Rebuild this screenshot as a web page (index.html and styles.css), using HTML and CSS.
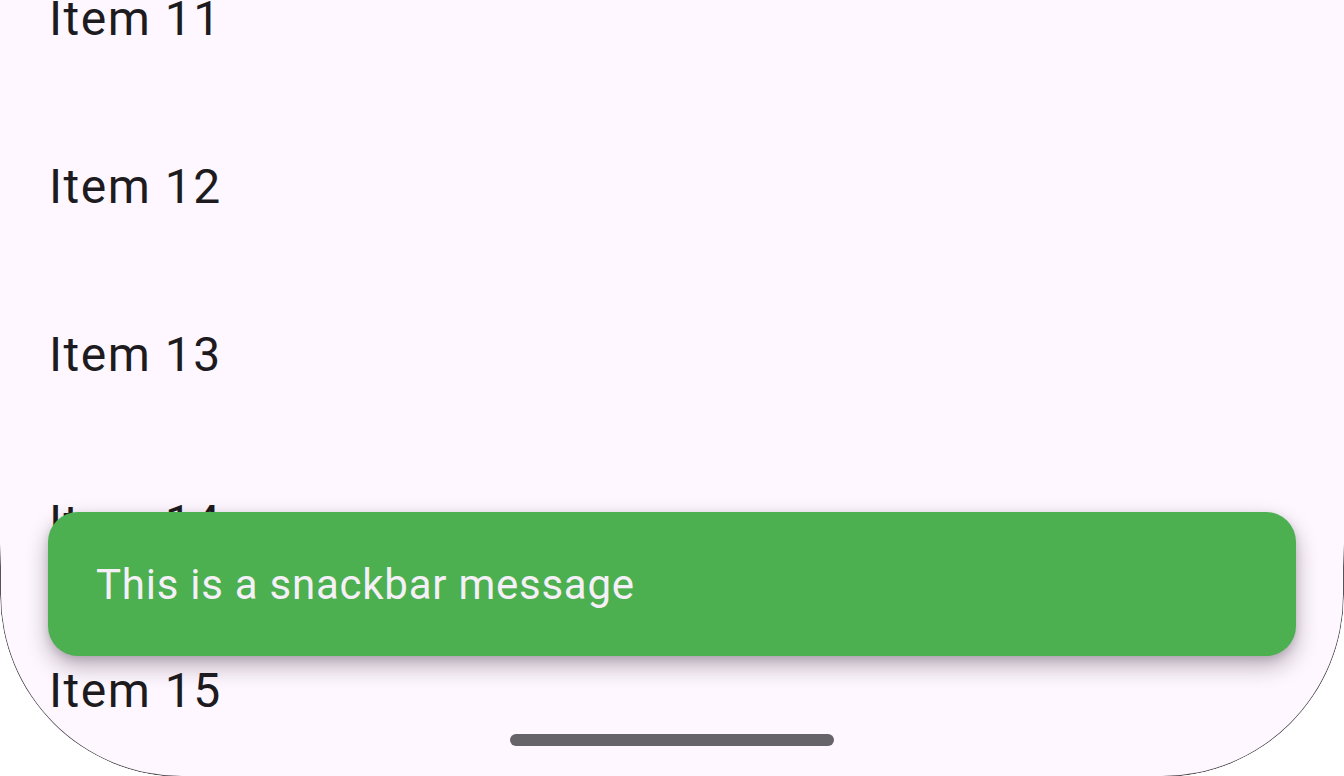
FILE: index.html
```html
<!DOCTYPE html>
<html lang="en">
<head>
<meta charset="utf-8">
<title>Snackbar</title>
<link rel="stylesheet" href="styles.css">
</head>
<body>
<div class="screen">
  <ul class="list">
    <li class="row">Item 11</li>
    <li class="row">Item 12</li>
    <li class="row">Item 13</li>
    <li class="row">Item 14</li>
    <li class="row">Item 15</li>
  </ul>
  <div class="snackbar"><span class="snack-text">This is a snackbar message</span></div>
  <div class="home-indicator"></div>
  <div class="frame-edge"></div>
</div>
</body>
</html>
```
FILE: styles.css
```css
html, body {
  margin: 0;
  padding: 0;
  background: #ffffff;
  overflow: hidden;
}
body {
  width: 1344px;
  height: 776px;
}
.screen {
  position: relative;
  width: 1344px;
  height: 777px;
  background: #fef7ff;
  border-bottom-left-radius: 182px 182px;
  border-bottom-right-radius: 182px 182px;
  overflow: hidden;
  font-family: Roboto, "Noto Sans", sans-serif;
}
.list {
  list-style: none;
  margin: -66px 0 0 0;
  padding: 0;
}
.row {
  height: 168px;
  padding-left: 49px;
  display: flex;
  align-items: center;
  font-size: 48px;
  line-height: normal;
  letter-spacing: 1.5px;
  color: #1d1b20;
}
.snackbar {
  position: absolute;
  left: 48px;
  top: 512px;
  width: 1248px;
  height: 144px;
  box-sizing: border-box;
  padding-left: 48px;
  display: flex;
  align-items: center;
  background: #4caf50;
  border-radius: 30px;
  box-shadow: 0 10px 22px rgba(40, 20, 40, 0.32), 0 3px 8px rgba(0, 0, 0, 0.12);
}
.snack-text {
  font-size: 42px;
  letter-spacing: 0.75px;
  color: #f5eff7;
}
.home-indicator {
  position: absolute;
  left: 510px;
  top: 734px;
  width: 324px;
  height: 12px;
  border-radius: 6px;
  background: #666369;
}
.frame-edge {
  position: absolute;
  inset: 0;
  border-bottom-left-radius: 182px 182px;
  border-bottom-right-radius: 182px 182px;
  box-shadow: inset 0 0 0 1px rgba(30, 30, 30, 0.75);
  -webkit-mask-image: linear-gradient(to bottom, transparent 70%, #000 73%);
  mask-image: linear-gradient(to bottom, transparent 70%, #000 73%);
  pointer-events: none;
}
```
